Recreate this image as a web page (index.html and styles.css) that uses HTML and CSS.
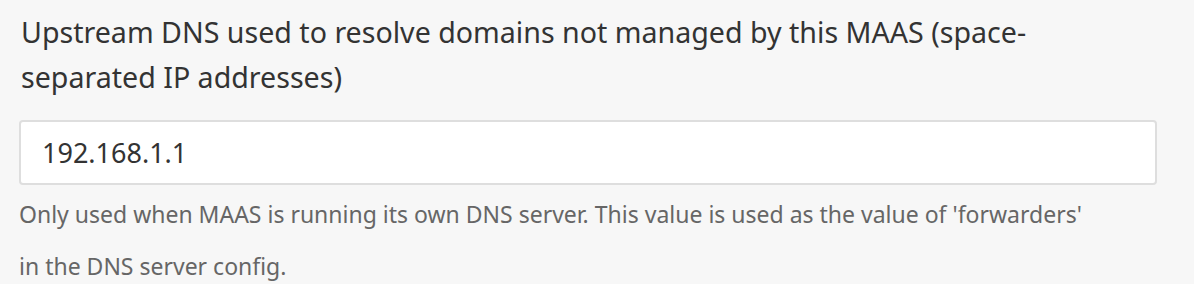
FILE: index.html
```html
<!DOCTYPE html>
<html lang="en">
<head>
  <meta charset="UTF-8" />
  <meta name="viewport" content="width=device-width,initial-scale=1.0" />
  <title>DNS settings</title>
  <link rel="stylesheet" href="styles.css">
</head>
<body>
  <div class="form-field">
    <label for="upstreamDns" class="field-label">Upstream DNS used to resolve domains not managed by this MAAS (space-separated IP addresses)</label>
    <input type="text" id="upstreamDns" class="field-input" value="192.168.1.1" />
    <p class="field-help">Only used when MAAS is running its own DNS server. This value is used as the value of 'forwarders' in the DNS server config.</p>
  </div>
</body>
</html>
```

FILE: styles.css
```css
html,body{margin:0;width:100vw;height:100vh;overflow:hidden;background:#f7f7f7}
body {
  font-family: "Noto Sans", "Open Sans", sans-serif;
  color: #333;
}
.form-field {
  display: flex;
  flex-direction: column;
  padding: 9px 37px 0 19px;
}
.field-label {
  font-size: 28.6px;
  line-height: 45px;
  padding-left: 2px;
}
.field-input {
  box-sizing: border-box;
  height: 65px;
  margin-top: 21px;
  padding: 0 21px;
  font-family: inherit;
  font-size: 27px;
  color: #333;
  background: #fff;
  border: 2px solid #dedede;
  border-radius: 4px;
}
.field-help {
  max-width: 1070px;
  margin: 3px 0 0;
  font-size: 23px;
  line-height: 52px;
  color: #666;
}
```
